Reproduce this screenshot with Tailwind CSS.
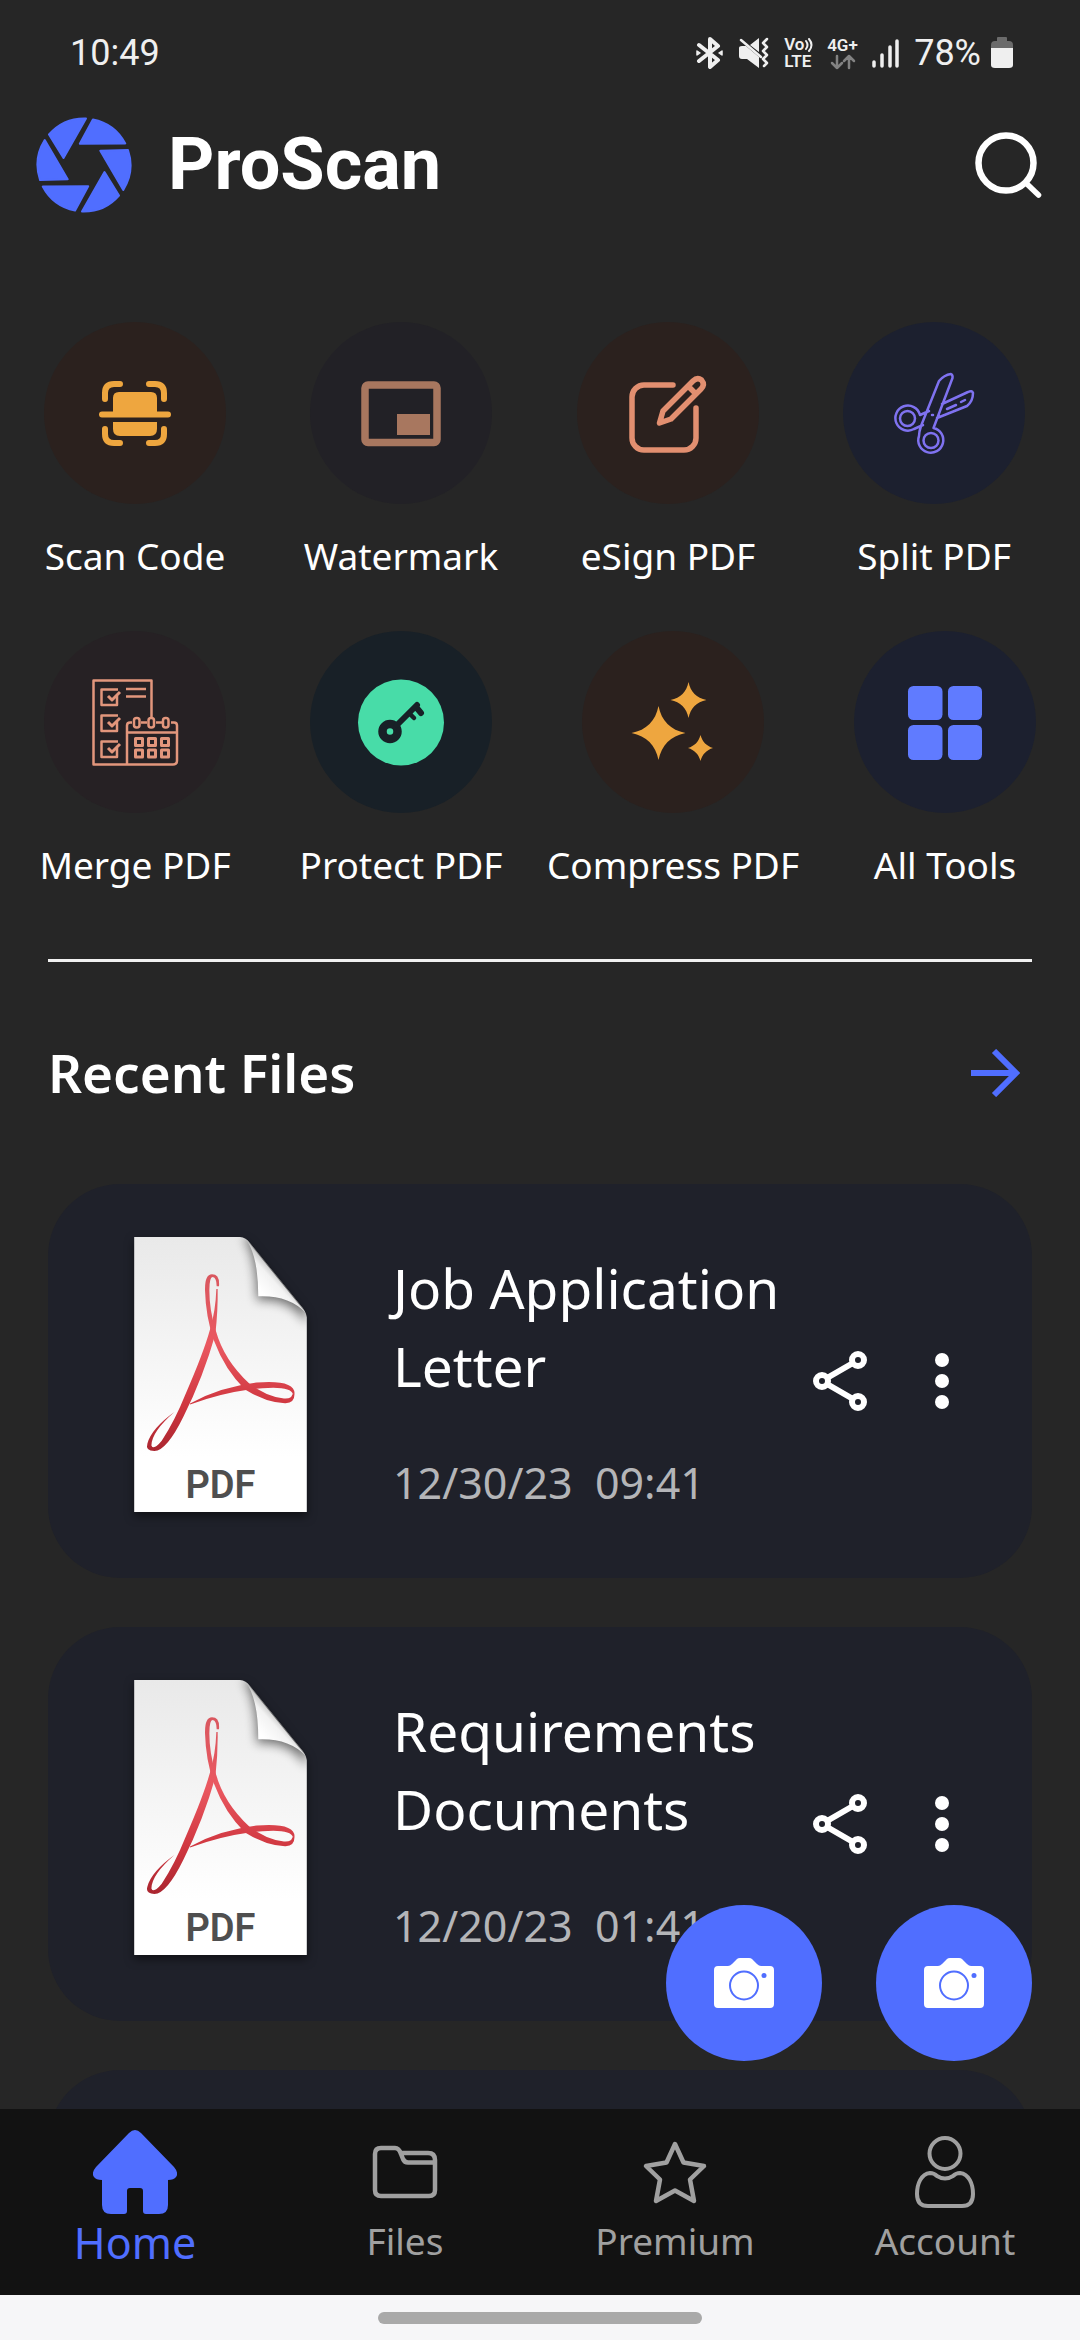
<!DOCTYPE html>
<html lang="en">
<head>
<meta charset="utf-8">
<meta name="viewport" content="width=device-width, initial-scale=1">
<title>ProScan</title>
<script src="https://cdn.jsdelivr.net/npm/@tailwindcss/browser@4"></script>
</head>
<body class="bg-[#262626] text-white font-['Noto_Sans','Open_Sans',sans-serif]">
<div class="flex h-screen flex-col overflow-hidden">

  <!-- Status bar -->
  <div class="flex h-[106px] shrink-0 items-center justify-between pr-[67px] pl-[70px] font-['Roboto',sans-serif] text-[#efefef]">
    <span class="text-[36px]">10:49</span>
    <div class="flex items-center gap-[10px]">
      <svg class="h-8 w-[33px]" viewBox="0 0 33 32" fill="none" stroke="#efefef" stroke-width="4" stroke-linecap="round" stroke-linejoin="round"><path d="M4 8 23 23 15 30V2L23 9 4 24"/><path d="M2 14v4l3-2zM27 14v4l-3-2z" stroke-width="1.500" fill="#efefef"/></svg>
      <svg class="h-8 w-9" viewBox="0 0 36 32" fill="#efefef"><path d="M1 11q0-2 3-2h4L21 20v11L9 22H4q-3 0-3-3zM12 8 21 1v14z"/><path d="m3 3 20 17M29 2l-4 4 4 4-4 4 4 4-4 4 4 4-3 3" fill="none" stroke="#efefef" stroke-width="2.500" stroke-linecap="round" stroke-linejoin="round"/></svg>
      <div class="flex w-[33px] flex-col text-[17px] leading-[17px] font-semibold">
        <span class="flex items-center">Vo<svg class="h-4 w-[10px]" viewBox="0 0 10 16" fill="none" stroke="#efefef" stroke-width="2" stroke-linecap="round"><path d="M2 4q3 4 0 8M5 2q5 6 0 12"/></svg></span>
        <span>LTE</span>
      </div>
      <div class="flex w-[35px] flex-col text-[17px] leading-[17px] font-semibold">
        <span>4G+</span>
        <svg class="h-4 w-[33px]" viewBox="0 0 33 16" fill="none" stroke="#828282" stroke-width="2.500" stroke-linecap="round" stroke-linejoin="round"><path d="M10 2v12M5 9l5 5 5-5M22 14V2M17 7l5-5 5 5"/></svg>
      </div>
      <svg class="h-8 w-8" viewBox="0 0 32 32" stroke="#efefef" stroke-width="3.500" stroke-linecap="round"><path d="M2 25v4M10 18v11M18 10v19M25 4v25"/></svg>
      <span class="text-[36px]">78%</span>
      <svg class="h-8 w-[22px]" viewBox="0 0 22 32"><path d="M6 1q0-1 1-1h8q1 0 1 1v3h2q4 0 4 4v3H0V8q0-4 4-4h2z" fill="#6b6b6b"/><path d="M0 11h22v17q0 3-4 3H4q-4 0-4-3z" fill="#efefef"/></svg>
    </div>
  </div>

  <!-- App header -->
  <header class="flex h-[118px] shrink-0 items-center pr-[38px] pl-9">
    <svg class="size-24" viewBox="0 0 96 96" fill="#506eff" stroke="#506eff" stroke-width="2" stroke-linejoin="round">
      <defs><path id="blade" d="M50 1.500 27.500 41 13 17.500A47 47 0 0 1 50 1.500z"/></defs>
      <use href="#blade"/><use href="#blade" transform="rotate(60 48 48)"/><use href="#blade" transform="rotate(120 48 48)"/><use href="#blade" transform="rotate(180 48 48)"/><use href="#blade" transform="rotate(240 48 48)"/><use href="#blade" transform="rotate(300 48 48)"/>
    </svg>
    <h1 class="ml-9 flex-1 font-['Roboto',sans-serif] text-[72px] leading-none font-bold">ProScan</h1>
    <button type="button" aria-label="Search"><svg class="size-[68px]" viewBox="0 0 68 68" fill="none" stroke="#fff"><circle cx="32" cy="32" r="27.500" stroke-width="6.500"/><path d="m53 53 11.500 11" stroke-width="5.500" stroke-linecap="round"/></svg></button>
  </header>

  <main class="relative flex min-h-0 flex-1 flex-col overflow-hidden">
    <!-- Tools -->
    <div class="grid shrink-0 grid-cols-[270fr_262fr_272fr_260fr] pt-[98px] pr-4 text-[37px] leading-[48px] whitespace-nowrap">
      <button type="button" class="flex flex-col items-center gap-7">
        <svg class="size-[182px] rounded-full bg-[#2b211e]" viewBox="0 0 182 182" fill="none" stroke="#eea63f" stroke-width="6" stroke-linecap="round"><path d="M61 77v-6q0-9 9-9h6M120 77v-6q0-9-9-9h-6M61 107v5q0 9 9 9h6M120 107v5q0 9-9 9h-6M58 92.500h66"/><path d="M69 92V76q0-6 6-6h32q6 0 6 6v16zM69 100h44v7q0 7-7 7H76q-7 0-7-7z" fill="#eea63f" stroke="none"/></svg>
        <span>Scan Code</span>
      </button>
      <button type="button" class="flex flex-col items-center gap-7">
        <svg class="size-[182px] rounded-full bg-[#222126]" viewBox="0 0 182 182" fill="none"><rect x="55" y="63" width="72" height="57.500" rx="3" stroke="#a8775f" stroke-width="7.500"/><path d="M87 92h33v21H87z" fill="#a8775f"/></svg>
        <span>Watermark</span>
      </button>
      <button type="button" class="flex flex-col items-center gap-7">
        <svg class="size-[182px] rounded-full bg-[#2b211e]" viewBox="0 0 182 182" fill="none" stroke="#e28f70" stroke-width="5.500" stroke-linecap="round" stroke-linejoin="round"><path d="M96 63H67a12 12 0 0 0-12 12v41a12 12 0 0 0 12 12h40a12 12 0 0 0 12-12V86"/><path d="m82.500 101 3.500-12 30-30c3-3 6-3 8.500-1 2.500 3 2.500 6-.5 9L94 97zM111 64l8 8"/></svg>
        <span>eSign PDF</span>
      </button>
      <button type="button" class="flex flex-col items-center gap-7">
        <svg class="size-[182px] rounded-full bg-[#1c202f]" viewBox="0 0 182 182" fill="none" stroke="#7f72f0" stroke-width="2.500" stroke-linecap="round" stroke-linejoin="round"><circle cx="64.500" cy="96.500" r="7.500"/><circle cx="88" cy="118.500" r="7.500"/><path d="M90.500 106a12.500 12.500 0 1 1-14.500 8q0-4 2-10l18-45q5-6 12-7 2 1 1.500 4zM80 103l-9 4a12.500 12.500 0 1 1 6-14l9-4M94 96l30-12q6-5 6-13-1-3-5-1L99 82M104 87l9-4M118 80l4-2M89 93h1"/></svg>
        <span>Split PDF</span>
      </button>
    </div>
    <div class="grid shrink-0 grid-cols-[270fr_262fr_282fr_262fr] pt-[51px] pr-1 text-[37px] leading-[48px] whitespace-nowrap">
      <button type="button" class="flex flex-col items-center gap-7">
        <svg class="size-[182px] rounded-full bg-[#262124]" viewBox="0 0 182 182" fill="none" stroke="#e2967c" stroke-width="2.500" stroke-linejoin="round"><path d="M107.500 87V49.500h-58v84H83M103 91.500h-6M118 91.500h-6M88 91.500h-2q-3 0-3 3v39h46q4 0 4-4v-35q0-3-3-3h-3M83 101.500h50"/><rect x="90" y="87" width="5.500" height="9.500" rx="2.500"/><rect x="104.500" y="87" width="5.500" height="9.500" rx="2.500"/><rect x="119" y="87" width="5.500" height="9.500" rx="2.500"/><path stroke-width="3" d="M91.500 107.500h7v7h-7zM104.500 107.500h7v7h-7zM117.500 107.500h7v7h-7zM91.500 119h7v7h-7zM104.500 119h7v7h-7zM117.500 119h7v7h-7z"/><path d="M74 58.500H57.500v15.500H73v-9M74 84.500H57.500V100H73v-9M74 110.500H57.500V126H73v-9M82 58h20M82 65.500h20"/><path stroke-width="3" d="m64 65 4 4 8-8M64 91l4 4 8-8M64 117l4 4 8-8"/></svg>
        <span>Merge PDF</span>
      </button>
      <button type="button" class="flex flex-col items-center gap-7">
        <svg class="size-[182px] rounded-full bg-[#182027]" viewBox="0 0 182 182" fill="none" stroke="#182027" stroke-linecap="round" stroke-linejoin="round"><circle cx="91" cy="91.500" r="43" fill="#48dca8" stroke="none"/><circle cx="80" cy="100.500" r="7.500" stroke-width="8.500"/><path stroke-width="6" d="m87 94 20-20M106 76l5 6"/><path stroke-width="4.500" d="m99 82 5 5"/></svg>
        <span>Protect PDF</span>
      </button>
      <button type="button" class="flex flex-col items-center gap-7">
        <svg class="size-[182px] rounded-full bg-[#2b211e]" viewBox="0 0 182 182" fill="#eea63f"><path d="M76.500 75c3 15 12 24 27 27-15 3-24 12-27 27-3-15-12-24-27-27 15-3 24-12 27-27zM106.500 51c2 10 8 16 18 18-10 2-16 8-18 18-2-10-8-16-18-18 10-2 16-8 18-18zM118.500 104c2 7 6 11 12.500 13-6.500 2-10.500 6-12.500 13-2-7-6-11-12.500-13 6.500-2 10.500-6 12.500-13z"/></svg>
        <span>Compress PDF</span>
      </button>
      <button type="button" class="flex flex-col items-center gap-7">
        <svg class="size-[182px] rounded-full bg-[#1c202f]" viewBox="0 0 182 182" fill="#607bff"><rect x="54" y="55" width="34.500" height="34" rx="5.500"/><rect x="94" y="55" width="34" height="34" rx="5.500"/><rect x="54" y="94" width="34.500" height="35" rx="5.500"/><rect x="94" y="94" width="34" height="35" rx="5.500"/></svg>
        <span>All Tools</span>
      </button>
    </div>

    <hr class="mx-12 mt-[70px] h-[3px] shrink-0 border-0 bg-[#f0f0f0]">

    <!-- Recent files -->
    <div class="flex shrink-0 items-center justify-between py-[73px] pr-[60px] pl-12">
      <h2 class="text-[53px] leading-[76px] font-semibold">Recent Files</h2>
      <a href="#recent" aria-label="All recent files"><svg class="h-12 w-[49px]" viewBox="0 0 49 48" fill="none" stroke="#506eff" stroke-width="6"><path d="M0 24h44M23 2l22 22-22 22"/></svg></a>
    </div>

    <svg class="absolute size-0" aria-hidden="true">
      <defs>
        <linearGradient id="paper" x1="0" y1="0" x2="0" y2="1"><stop offset="0" stop-color="#e9e9e9"/><stop offset=".8" stop-color="#fff"/></linearGradient>
        <linearGradient id="red" gradientUnits="userSpaceOnUse" x1="0" y1="190" x2="0" y2="720"><stop offset="0" stop-color="#d9575f"/><stop offset=".4" stop-color="#ea5860"/><stop offset=".75" stop-color="#cf363f"/><stop offset="1" stop-color="#ab2630"/></linearGradient>
        <linearGradient id="curl" gradientUnits="userSpaceOnUse" x1="480" y1="240" x2="540" y2="185"><stop offset="0" stop-color="#fff"/><stop offset=".6" stop-color="#f2f2f2"/><stop offset="1" stop-color="#b5b5b5"/></linearGradient>
        <filter id="soft" x="-50%" y="-50%" width="200%" height="200%"><feGaussianBlur stdDeviation="16"/></filter>
        <clipPath id="sheet"><path d="M102 80h318q18 2 30 18l150 185q18 20 21 38v585H102z"/></clipPath>
        <symbol id="pdf" viewBox="102 80 519 826">
          <g clip-path="url(#sheet)">
            <path d="M102 80h519v826H102z" fill="url(#paper)"/>
            <path d="M430 80q40 50 42 190 100-10 149 70V80z" fill="#000" opacity=".55" filter="url(#soft)"/>
            <path d="M435 83q40 50 40 175 92-4 143 50z" fill="url(#curl)"/>
          </g>
          <g fill="url(#red)">
            <path d="M357 228Q360 192 336 192 314 192 315 240 317 320 342 392 375 480 435 538 500 578 555 579 584 580 584 550L577 553Q575 567 552 565 500 560 448 520 372 450 347 360 328 300 328 240 328 200 338 200 350 202 350 228z"/>
            <path d="M353 236Q354 300 346 372 310 500 250 620 200 722 163 723 135 722 142 700 155 655 223 606 155 665 154 706 160 722 185 692 225 630 255 555 310 430 330 358 347 300 349 236z"/>
            <path d="M270 583Q360 550 448 538 572 522 579 552L584 550Q584 508 470 517 360 530 270 580z"/>
          </g>
        </symbol>
        <symbol id="share" viewBox="0 0 72 72"><g fill="none" stroke="#fff" stroke-width="6"><circle cx="54" cy="15" r="6"/><circle cx="18" cy="36" r="6"/><circle cx="54" cy="57" r="6"/><path d="m23 33 26-15M23 39l26 15"/></g></symbol>
        <symbol id="more" viewBox="0 0 72 72"><g fill="#fff"><circle cx="36" cy="15" r="7"/><circle cx="36" cy="36" r="7"/><circle cx="36" cy="57" r="7"/></g></symbol>
        <symbol id="camera" viewBox="0 0 60 50"><path d="M4 8h10q2 0 4-2l5-5q1-1 3-1h9q2 0 3 1l5 5q2 2 4 2h9q4 0 4 4v34q0 4-4 4H4q-4 0-4-4V12q0-4 4-4z" fill="#fff"/><circle cx="30" cy="27.500" r="14" fill="none" stroke="#506eff" stroke-width="2"/><circle cx="50" cy="17.500" r="2.500" fill="#506eff"/></symbol>
      </defs>
    </svg>

    <ul id="recent" class="flex flex-col gap-[49px] px-12">
      <li class="flex h-[394px] shrink-0 items-center rounded-[72px] bg-[#1f212a] pr-[54px] pl-[86px]">
        <div class="relative mb-[14px] h-[275px] w-[173px] shrink-0">
          <svg class="size-full drop-shadow-[0_4px_5px_#00000080]"><use href="#pdf"/></svg>
          <span class="absolute inset-x-0 bottom-2 text-center font-['Roboto',sans-serif] text-[38px] leading-[38px] font-semibold text-[#4f4f4f]">PDF</span>
        </div>
        <div class="ml-[86px] flex-1">
          <h3 class="text-[55px] leading-[78px]">Job Application Letter</h3>
          <p class="mt-12 text-[43px] leading-[60px] whitespace-pre text-[#b4b5b8]">12/30/23  09:41</p>
        </div>
        <div class="flex gap-[30px]">
          <button type="button" aria-label="Share"><svg class="size-[72px]"><use href="#share"/></svg></button>
          <button type="button" aria-label="More"><svg class="size-[72px]"><use href="#more"/></svg></button>
        </div>
      </li>
      <li class="flex h-[394px] shrink-0 items-center rounded-[72px] bg-[#1f212a] pr-[54px] pl-[86px]">
        <div class="relative mb-[14px] h-[275px] w-[173px] shrink-0">
          <svg class="size-full drop-shadow-[0_4px_5px_#00000080]"><use href="#pdf"/></svg>
          <span class="absolute inset-x-0 bottom-2 text-center font-['Roboto',sans-serif] text-[38px] leading-[38px] font-semibold text-[#4f4f4f]">PDF</span>
        </div>
        <div class="ml-[86px] flex-1">
          <h3 class="text-[55px] leading-[78px]">Requirements Documents</h3>
          <p class="mt-12 text-[43px] leading-[60px] whitespace-pre text-[#b4b5b8]">12/20/23  01:41</p>
        </div>
        <div class="flex gap-[30px]">
          <button type="button" aria-label="Share"><svg class="size-[72px]"><use href="#share"/></svg></button>
          <button type="button" aria-label="More"><svg class="size-[72px]"><use href="#more"/></svg></button>
        </div>
      </li>
      <li class="h-[394px] shrink-0 rounded-[72px] bg-[#1f212a]"></li>
    </ul>

    <!-- Floating capture buttons -->
    <div class="absolute right-12 bottom-12 flex gap-[54px]">
      <button type="button" aria-label="Scan with camera" class="flex size-[156px] items-center justify-center rounded-full bg-[#506eff]"><svg class="h-[50px] w-[60px]"><use href="#camera"/></svg></button>
      <button type="button" aria-label="Take photo" class="flex size-[156px] items-center justify-center rounded-full bg-[#506eff]"><svg class="h-[50px] w-[60px]"><use href="#camera"/></svg></button>
    </div>
  </main>

  <!-- Bottom navigation -->
  <nav class="grid h-[186px] shrink-0 grid-cols-4 items-center bg-[#121212] pb-[3px] text-[37px] leading-[49px] text-[#a0a0a0]">
    <a href="#home" class="flex flex-col items-center text-[#506eff]">
      <svg class="size-[84px]" viewBox="0 0 84 84" fill="#506eff"><path d="M36 3q6-6 12 0l33 34q5 6 2 10-2 3-8 3v25q0 9-9 9H53q-3 0-3-3V61q0-3-3-3H37q-3 0-3 3v20q0 3-3 3H18q-9 0-9-9V50q-6 0-8-3-3-4 2-10z"/></svg>
      <span class="text-[43px] leading-[57px]">Home</span>
    </a>
    <a href="#files" class="flex flex-col items-center gap-2">
      <svg class="size-[72px]" viewBox="0 0 72 72" fill="none" stroke="#a0a0a0" stroke-width="4.500" stroke-linejoin="round"><path d="M31.500 17H59q7 0 7 7v30q0 6-6 6H12q-6 0-6-6V18q0-6 6-6h14q4 0 6 6l2 5q1.500 3.500 5 3.500h27"/></svg>
      <span>Files</span>
    </a>
    <a href="#premium" class="flex flex-col items-center gap-2">
      <svg class="size-[72px]" viewBox="0 0 72 72" fill="none" stroke="#a0a0a0" stroke-width="4.500" stroke-linejoin="round"><path d="m36 8 8.500 18.500L65 30 51 43.500 55 65 36 54.500 17 65l4-21.500L7 30l20.500-3.500z"/></svg>
      <span>Premium</span>
    </a>
    <a href="#account" class="flex flex-col items-center gap-2">
      <svg class="size-[72px]" viewBox="0 0 72 72" fill="none" stroke="#a0a0a0" stroke-width="4"><circle cx="36" cy="17.500" r="15.500"/><path d="M21 37C12 38 8 48 8 58q0 12 11 12h34q11 0 11-12c0-10-4-20-13-21q-4 0-7 3-8 5-16 0-3-3-7-3z"/></svg>
      <span>Account</span>
    </a>
  </nav>

  <!-- System gesture area -->
  <div class="flex h-[45px] shrink-0 justify-center bg-[#f6f6f8] pt-[17px]"><div class="h-3 w-[324px] rounded-full bg-[#a9a9a9]"></div></div>
</div>
</body>
</html>
